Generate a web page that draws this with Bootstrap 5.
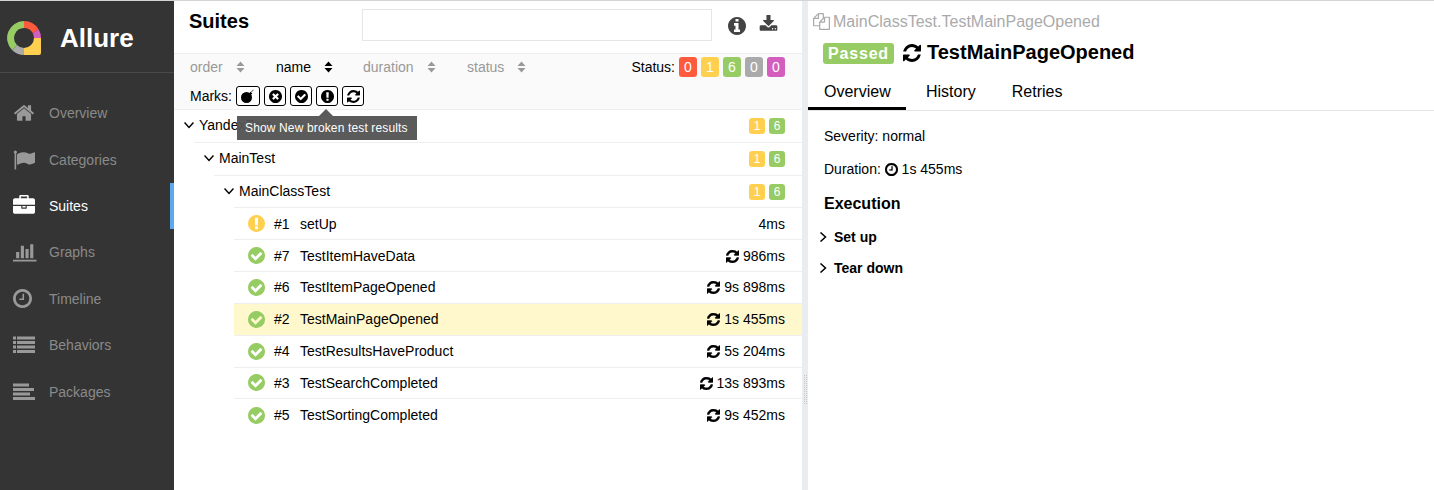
<!DOCTYPE html>
<html lang="en">
<head>
    <meta charset="UTF-8">
    <meta name="viewport" content="width=device-width, initial-scale=1.0">
    <title>Allure Report</title>
    <link href="https://cdn.jsdelivr.net/npm/bootstrap@5.3.1/dist/css/bootstrap.min.css" rel="stylesheet">
    <style>
        html, body { height: 100%; }
        body {
            font-family: "Liberation Sans", Arial, sans-serif;
            font-size: 14px;
            line-height: 20px;
            color: #000;
            background: #fff;
            border-top: 1px solid #d4d4d4;
            overflow: hidden;
        }
        .ico { fill: currentColor; display: inline-block; flex: none; }

        .app { height: 489px; }

        /* side menu */
        .side { width: 174px; background: #343434; flex: none; }
        .brand { height: 72px; border-bottom: 1px solid #4a4a4a; padding: 2px 0 0 7px; margin-bottom: 17px; }
        .brand-name { font-size: 26px; font-weight: 700; color: #fff; margin-left: 19px; line-height: 30px; }
        .side-link { height: 46.4px; padding-left: 13px; color: #8a8a8a; position: relative; }
        .side-link .ico { width: 22px; height: 22px; color: #999; }
        .side-link span { position: absolute; left: 49px; }
        .side-link.on { color: #fff; border-right: 4px solid #5ba9ef; }
        .side-link.on .ico { color: #fff; }

        /* suites pane */
        .suites { width: 628px; flex: none; position: relative; }
        .suites-top { height: 53px; padding: 8px 16px 0 15px; border-bottom: 1px solid #eee; }
        .suites-title { font-size: 20px; font-weight: 700; line-height: 24px; margin: 0; width: 173px; }
        .search-box { width: 350px; height: 32px; border: 1px solid #e6e6e6; }
        .top-icons { margin-left: 16px; color: #444; gap: 13px; }
        .info-ico { margin-top: 8px; }
        .save-ico { margin-top: 6px; }
        .controls { height: 56px; background: #fafafa; border-bottom: 1px solid #eee; padding: 3px 17px 0 16px; }
        .sorter { color: #999; position: absolute; display: flex; align-items: center; }
        .sorter.on { color: #000; }
        .sorter .ico { margin-left: 13px; width: 9px; height: 12px; }
        .sort-row { height: 20px; position: relative; }
        .stat { width: 18px; height: 20px; border-radius: 3px; color: #fff; text-align: center; font-size: 14px; line-height: 20px; margin-left: 4px; }
        .stat-sm { width: 16px; height: 16px; font-size: 12px; line-height: 16px; margin-top: 2px; }
        .bg-failed { background: #fd5a3e; }
        .bg-broken { background: #ffd050; }
        .bg-passed { background: #97cc64; }
        .bg-skipped { background: #aaa; }
        .bg-unknown { background: #d35ebe; }
        .marks-row { margin-top: 9px; height: 20px; }
        .mark-btn { width: 22px; height: 20px; border: 1px solid #000; border-radius: 3px; margin-left: 4px; background: #fff; display: flex; align-items: center; justify-content: center; }
        .mark-btn .ico { width: 13px; height: 13px; }
        .mark-btn.wide { width: 24px; }
        .mark-btn.wide .ico { width: 16px; height: 16px; }
        .hint { position: absolute; left: 63px; top: 115px; width: 180px; height: 24px; background: rgba(84, 84, 84, .96); color: #fff; font-size: 12px; letter-spacing: .14px; line-height: 24px; padding-left: 8px; }
        .hint::before { content: ""; position: absolute; left: 82px; top: -7px; border: 7px solid transparent; border-top: 0; border-bottom-color: #5a5a5a; }

        .chev { width: 10px; height: 10px; fill: none; stroke: #000; stroke-width: 1.5; flex: none; }
        .group-row { height: 33px; padding: 0 17px 2px 0; border-bottom: 1px solid #eee; }
        .group-row .chev { margin: 0 5px 0 -10px; }
        .lvl-1 { margin-left: 20px; }
        .lvl-2 { margin-left: 40px; }
        .lvl-3 { margin-left: 60px; height: 32.3px; }
        .tree-row { height: 31.85px; margin-left: 60px; padding: 0 17px 0 14px; border-bottom: 1px solid #eee; }
        .tree-row.picked { background: #fff8cc; }
        .tree-row:last-of-type { border-bottom: 0; }
        .tree-row .ico.st { width: 17px; height: 17px; }
        .tree-num { width: 26px; margin-left: 9px; }
        .tree-dur .ico { width: 13px; height: 13px; margin-right: 4px; vertical-align: -2px; stroke: currentColor; stroke-width: 50; }
        .ok { color: #97cc64; }
        .warn { color: #ffd050; }

        .splitter { width: 6px; background: #e9edf0; flex: none; display: flex; align-items: flex-start; justify-content: center; padding-top: 374px; }
        .grip { width: 5px; height: 30px; background: conic-gradient(#c6c6c6 25%, transparent 25%) 0 0 / 2px 2px; }

        /* test pane */
        .details { flex: 1 1 auto; min-width: 0; }
        .crumb { color: #aaa; font-size: 16px; padding: 8px 0 0 5px; height: 33px; }
        .crumb .ico { width: 17px; height: 17px; margin-right: 3px; }
        .test-head { padding: 5px 0 0 15px; height: 33px; }
        .passed-tag { background: #97cc64; color: #fff; font-weight: 700; font-size: 16px; border-radius: 3px; height: 21px; width: 71px; text-align: center; line-height: 21px; letter-spacing: .8px; }
        .test-title { font-size: 20px; font-weight: 700; margin: -2px 0 0 6px; line-height: 24px; }
        .test-head .ico { width: 18px; height: 18px; margin-left: 9px; }
        .tabs-row { height: 44px; border-bottom: 1px solid #e5e5e5; gap: 4px; padding-top: 3px; }
        .tab-item { font-size: 16px; padding: 6px 16px 0; height: 100%; display: flex; align-items: center; color: #000; border-bottom: 3px solid transparent; }
        .tab-item.on { border-bottom-color: #000; width: 98px; }
        .pane-body { padding: 15px 16px; }
        .info-line { margin-bottom: 13px; }
        .info-line .ico { width: 13px; height: 13px; vertical-align: -2px; stroke: currentColor; stroke-width: 30; }
        .exec-title { font-size: 16px; font-weight: 700; line-height: 20px; margin: 15px 0 13px; }
        .step-row { font-weight: 700; height: 31px; margin-left: -6px; align-items: flex-start; }
        .step-row .chev { margin: 5px 6px 0 0; }
    </style>
</head>
<body>
<svg width="0" height="0" class="position-absolute">
    <defs>
        <symbol id="i-home" viewBox="0 0 1792 1792"><path d="M1472 992v480q0 26-19 45t-45 19h-384v-384h-256v384h-384q-26 0-45-19t-19-45v-480q0-1 .5-3t.5-3l575-474 575 474q1 2 1 6zm223-69l-62 74q-8 9-21 11h-3q-13 0-21-7l-692-577-692 577q-12 8-24 7-13-2-21-11l-62-74q-8-10-7-23.5t11-21.5l719-599q32-26 76-26t76 26l244 204v-195q0-14 9-23t23-9h192q14 0 23 9t9 23v408l219 182q10 8 11 21.5t-7 23.5z"/></symbol>
        <symbol id="i-flag" viewBox="0 0 1792 1792"><path d="M320 256q0 72-64 110v1266q0 13-9.5 22.5t-22.5 9.5h-64q-13 0-22.5-9.5t-9.5-22.5v-1266q-64-38-64-110 0-53 37.5-90.5t90.5-37.5 90.5 37.5 37.5 90.5zm1472 64v763q0 25-12.5 38.5t-39.5 27.5q-215 116-369 116-61 0-123.5-22t-108.5-48-115.5-48-142.5-22q-192 0-464 146-17 9-33 9-26 0-45-19t-19-45v-742q0-32 31-55 21-14 79-43 236-120 421-120 107 0 200 29t219 88q38 19 88 19 54 0 117.5-21t110-47 88-47 54.5-21q26 0 45 19t19 45z"/></symbol>
        <symbol id="i-case" viewBox="0 0 1792 1792"><path d="M640 256h512v-128h-512v128zm1152 640v480q0 66-47 113t-113 47h-1472q-66 0-113-47t-47-113v-480h672v160q0 26 19 45t45 19h320q26 0 45-19t19-45v-160h672zm-768 0v128h-256v-128h256zm768-480v384h-1792v-384q0-66 47-113t113-47h352v-160q0-40 28-68t68-28h576q40 0 68 28t28 68v160h352q66 0 113 47t47 113z"/></symbol>
        <symbol id="i-chart" viewBox="0 0 2048 1792"><path d="M512 896v512h-256v-512h256zm384-512v1024h-256v-1024h256zm1024 1152v128h-2048v-1536h128v1408h1920zm-640-896v768h-256v-768h256zm384-384v1152h-256v-1152h256z"/></symbol>
        <symbol id="i-clock" viewBox="128 128 1536 1536"><path d="M1024 544v448q0 14-9 23t-23 9h-320q-14 0-23-9t-9-23v-64q0-14 9-23t23-9h224v-352q0-14 9-23t23-9h64q14 0 23 9t9 23zm416 352q0-148-73-273t-198-198-273-73-273 73-198 198-73 273 73 273 198 198 273 73 273-73 198-198 73-273zm224 0q0 209-103 385.5t-279.5 279.5-385.5 103-385.5-103-279.5-279.5-103-385.5 103-385.5 279.5-279.5 385.5-103 385.5 103 279.5 279.5 103 385.5z"/></symbol>
        <symbol id="i-list" viewBox="0 0 22 22"><path d="M0 2.500h3v3H0zM4 2.500h18v3H4zM0 7h3v3H0zM4 7h18v3H4zM0 11.500h3v3H0zM4 11.500h18v3H4zM0 16h3v3H0zM4 16h18v3H4z"/></symbol>
        <symbol id="i-align" viewBox="0 0 22 22"><path d="M0 2.500h16v3H0zM0 7h21v3H0zM0 11.500h17v3H0zM0 16h22v3H0z"/></symbol>
        <symbol id="i-refresh" viewBox="128 128 1536 1536"><path d="M1639 1056q0 5-1 7-64 268-268 434.5t-478 166.5q-146 0-282.5-55t-243.5-157l-129 129q-19 19-45 19t-45-19-19-45v-448q0-26 19-45t45-19h448q26 0 45 19t19 45-19 45l-137 137q71 66 161 102t187 36q134 0 250-65t186-179q11-17 53-117 8-23 30-23h192q13 0 22.5 9.500t9.500 22.500zm25-800v448q0 26-19 45t-45 19h-448q-26 0-45-19t-19-45 19-45l138-138q-148-137-349-137-134 0-250 65t-186 179q-11 17-53 117-8 23-30 23h-199q-13 0-22.500-9.500t-9.500-22.500v-7q65-268 270-434.500t480-166.500q146 0 284 55.500t245 156.500l130-129q19-19 45-19t45 19 19 45z"/></symbol>
        <symbol id="i-check" viewBox="128 128 1536 1536"><path d="M1412 734q0-28-18-46l-91-90q-19-19-45-19t-45 19l-408 407-226-226q-19-19-45-19t-45 19l-91 90q-18 18-18 46 0 27 18 45l362 362q19 19 45 19 27 0 46-19l543-543q18-18 18-45zm252 162q0 209-103 385.500t-279.500 279.500-385.500 103-385.500-103-279.500-279.500-103-385.500 103-385.500 279.500-279.500 385.500-103 385.500 103 279.500 279.500 103 385.500z"/></symbol>
        <symbol id="i-excl" viewBox="128 128 1536 1536"><path d="M896 128q209 0 385.500 103t279.500 279.500 103 385.500-103 385.500-279.500 279.500-385.500 103-385.500-103-279.500-279.500-103-385.500 103-385.500 279.500-279.500 385.500-103zm128 1247v-190q0-14-9-23.500t-22-9.500h-192q-13 0-23 10t-10 23v190q0 13 10 23t23 10h192q13 0 22-9.500t9-23.500zm-2-344l18-621q0-12-10-18-10-8-24-8h-220q-14 0-24 8-10 6-10 18l17 621q0 10 10 17.500t24 7.500h185q14 0 23.500-7.500t10.500-17.500z"/></symbol>
        <symbol id="i-times" viewBox="128 128 1536 1536"><path d="M1277 1122q0-26-19-45l-181-181 181-181q19-19 19-45 0-27-19-46l-90-90q-19-19-46-19-26 0-45 19l-181 181-181-181q-19-19-45-19-27 0-46 19l-90 90q-19 19-19 46 0 26 19 45l181 181-181 181q-19 19-19 45 0 27 19 46l90 90q19 19 46 19 26 0 45-19l181-181 181 181q19 19 45 19 27 0 46-19l90-90q19-19 19-46zm387-226q0 209-103 385.500t-279.500 279.500-385.500 103-385.500-103-279.500-279.500-103-385.500 103-385.500 279.500-279.500 385.500-103 385.500 103 279.500 279.500 103 385.500z"/></symbol>
        <symbol id="i-info" viewBox="128 128 1536 1536"><path d="M1152 1376v-160q0-14-9-23t-23-9h-96v-512q0-14-9-23t-23-9h-320q-14 0-23 9t-9 23v160q0 14 9 23t23 9h96v320h-96q-14 0-23 9t-9 23v160q0 14 9 23t23 9h448q14 0 23-9t9-23zm-128-896v-160q0-14-9-23t-23-9h-192q-14 0-23 9t-9 23v160q0 14 9 23t23 9h192q14 0 23-9t9-23zm640 416q0 209-103 385.500t-279.500 279.500-385.500 103-385.500-103-279.500-279.500-103-385.500 103-385.500 279.500-279.500 385.500-103 385.500 103 279.500 279.500 103 385.500z"/></symbol>
        <symbol id="i-download" viewBox="0 128 1792 1536"><path d="M1344 1344q0-26-19-45t-45-19-45 19-19 45 19 45 45 19 45-19 19-45zm256 0q0-26-19-45t-45-19-45 19-19 45 19 45 45 19 45-19 19-45zm128-224v320q0 40-28 68t-68 28h-1472q-40 0-68-28t-28-68v-320q0-40 28-68t68-28h465l135 136q58 56 136 56t136-56l136-136h464q40 0 68 28t28 68zm-325-569q17 41-14 70l-448 448q-18 19-45 19t-45-19l-448-448q-31-29-14-70 17-39 59-39h256v-448q0-26 19-45t45-19h256q26 0 45 19t19 45v448h256q42 0 59 39z"/></symbol>
        <symbol id="i-copy" viewBox="0 0 1792 1792"><path d="M1696 384q40 0 68 28t28 68v1216q0 40-28 68t-68 28h-960q-40 0-68-28t-28-68v-288h-544q-40 0-68-28t-28-68v-672q0-40 20-88t48-76l408-408q28-28 76-48t88-20h416q40 0 68 28t28 68v328q68-40 128-40h416zm-544 213l-299 299h299v-299zm-640-384l-299 299h299v-299zm196 647l316-316v-416h-384v416q0 40-28 68t-68 28h-416v640h512v-256q0-40 20-88t48-76zm956 804v-1152h-384v416q0 40-28 68t-68 28h-416v640h896z"/></symbol>
        <symbol id="i-bomb" viewBox="0 0 16 16"><circle cx="6.500" cy="9.500" r="5.500"/><path d="M9 5.500l1.700-1.700 1.600 1.600-1.700 1.700z"/><path d="M11.500 4q.5-1.500 2-2" fill="none" stroke="#777" stroke-width="1.200"/></symbol>
        <symbol id="i-sort" viewBox="0 0 9 12"><path d="M4.500 0.500L8.500 5H0.500zM0.500 7H8.500L4.500 11.500z"/></symbol>
    </defs>
</svg>

<div class="app d-flex">
    <nav class="side">
        <div class="brand d-flex align-items-center">
            <svg width="34" height="34" viewBox="0 0 34 34" fill="none" stroke-width="7">
                <path d="M17 3.500A13.500 13.500 0 0 1 28.700 10.250" stroke="#fd5a3e"/>
                <path d="M28.700 10.250A13.500 13.500 0 0 1 30.500 17" stroke="#d35ebe"/>
                <path d="M27 17H34V32Q34 34 32 34H17V27A10 10 0 0 0 27 17Z" fill="#ffd050"/>
                <path d="M17 30.500A13.500 13.500 0 0 1 7.500 26.500" stroke="#aaa"/>
                <path d="M7.500 26.500A13.500 13.500 0 0 1 17 3.500" stroke="#97cc64"/>
            </svg>
            <span class="brand-name">Allure</span>
        </div>
        <div class="side-link d-flex align-items-center"><svg class="ico"><use href="#i-home"/></svg><span>Overview</span></div>
        <div class="side-link d-flex align-items-center"><svg class="ico"><use href="#i-flag"/></svg><span>Categories</span></div>
        <div class="side-link on d-flex align-items-center"><svg class="ico"><use href="#i-case"/></svg><span>Suites</span></div>
        <div class="side-link d-flex align-items-center"><svg class="ico" style="width:25px"><use href="#i-chart"/></svg><span>Graphs</span></div>
        <div class="side-link d-flex align-items-center"><svg class="ico" style="width:19px;height:19px"><use href="#i-clock"/></svg><span>Timeline</span></div>
        <div class="side-link d-flex align-items-center"><svg class="ico"><use href="#i-list"/></svg><span>Behaviors</span></div>
        <div class="side-link d-flex align-items-center"><svg class="ico"><use href="#i-align"/></svg><span>Packages</span></div>
    </nav>

    <main class="suites">
        <div class="suites-top d-flex align-items-start">
            <h2 class="suites-title">Suites</h2>
            <div class="search-box"></div>
            <div class="top-icons d-flex align-items-start">
                <svg class="ico info-ico" width="18" height="18"><use href="#i-info"/></svg>
                <svg class="ico save-ico" width="19" height="18"><use href="#i-download"/></svg>
            </div>
        </div>

        <div class="controls">
            <div class="sort-row d-flex align-items-center justify-content-end">
                <div class="sorter" style="left:0">order<svg class="ico"><use href="#i-sort"/></svg></div>
                <div class="sorter on" style="left:86px">name<svg class="ico"><use href="#i-sort"/></svg></div>
                <div class="sorter" style="left:173px">duration<svg class="ico"><use href="#i-sort"/></svg></div>
                <div class="sorter" style="left:277px">status<svg class="ico"><use href="#i-sort"/></svg></div>
                <span>Status:</span>
                <div class="stat bg-failed">0</div>
                <div class="stat bg-broken">1</div>
                <div class="stat bg-passed">6</div>
                <div class="stat bg-skipped">0</div>
                <div class="stat bg-unknown">0</div>
            </div>
            <div class="marks-row d-flex align-items-center">
                <span>Marks:</span>
                <div class="mark-btn wide"><svg class="ico"><use href="#i-bomb"/></svg></div>
                <div class="mark-btn"><svg class="ico"><use href="#i-times"/></svg></div>
                <div class="mark-btn"><svg class="ico"><use href="#i-check"/></svg></div>
                <div class="mark-btn"><svg class="ico"><use href="#i-excl"/></svg></div>
                <div class="mark-btn"><svg class="ico"><use href="#i-refresh"/></svg></div>
            </div>
        </div>

        <div class="hint">Show New broken test results</div>

        <div class="group-row lvl-1 d-flex align-items-center">
            <svg class="chev" viewBox="0 0 10 10"><path d="M0.500 2.500L5 7.500L9.500 2.500"/></svg>
            <span class="flex-grow-1">YandexTest</span>
            <div class="stat stat-sm bg-broken">1</div><div class="stat stat-sm bg-passed">6</div>
        </div>
        <div class="group-row lvl-2 d-flex align-items-center">
            <svg class="chev" viewBox="0 0 10 10"><path d="M0.500 2.500L5 7.500L9.500 2.500"/></svg>
            <span class="flex-grow-1">MainTest</span>
            <div class="stat stat-sm bg-broken">1</div><div class="stat stat-sm bg-passed">6</div>
        </div>
        <div class="group-row lvl-3 d-flex align-items-center">
            <svg class="chev" viewBox="0 0 10 10"><path d="M0.500 2.500L5 7.500L9.500 2.500"/></svg>
            <span class="flex-grow-1">MainClassTest</span>
            <div class="stat stat-sm bg-broken">1</div><div class="stat stat-sm bg-passed">6</div>
        </div>

        <div class="tree-row d-flex align-items-center">
            <svg class="ico st warn"><use href="#i-excl"/></svg>
            <span class="tree-num">#1</span><span class="flex-grow-1">setUp</span>
            <span class="tree-dur">4ms</span>
        </div>
        <div class="tree-row d-flex align-items-center">
            <svg class="ico st ok"><use href="#i-check"/></svg>
            <span class="tree-num">#7</span><span class="flex-grow-1">TestItemHaveData</span>
            <span class="tree-dur"><svg class="ico"><use href="#i-refresh"/></svg>986ms</span>
        </div>
        <div class="tree-row d-flex align-items-center">
            <svg class="ico st ok"><use href="#i-check"/></svg>
            <span class="tree-num">#6</span><span class="flex-grow-1">TestItemPageOpened</span>
            <span class="tree-dur"><svg class="ico"><use href="#i-refresh"/></svg>9s 898ms</span>
        </div>
        <div class="tree-row picked d-flex align-items-center">
            <svg class="ico st ok"><use href="#i-check"/></svg>
            <span class="tree-num">#2</span><span class="flex-grow-1">TestMainPageOpened</span>
            <span class="tree-dur"><svg class="ico"><use href="#i-refresh"/></svg>1s 455ms</span>
        </div>
        <div class="tree-row d-flex align-items-center">
            <svg class="ico st ok"><use href="#i-check"/></svg>
            <span class="tree-num">#4</span><span class="flex-grow-1">TestResultsHaveProduct</span>
            <span class="tree-dur"><svg class="ico"><use href="#i-refresh"/></svg>5s 204ms</span>
        </div>
        <div class="tree-row d-flex align-items-center">
            <svg class="ico st ok"><use href="#i-check"/></svg>
            <span class="tree-num">#3</span><span class="flex-grow-1">TestSearchCompleted</span>
            <span class="tree-dur"><svg class="ico"><use href="#i-refresh"/></svg>13s 893ms</span>
        </div>
        <div class="tree-row d-flex align-items-center">
            <svg class="ico st ok"><use href="#i-check"/></svg>
            <span class="tree-num">#5</span><span class="flex-grow-1">TestSortingCompleted</span>
            <span class="tree-dur"><svg class="ico"><use href="#i-refresh"/></svg>9s 452ms</span>
        </div>
    </main>

    <div class="splitter"><div class="grip"></div></div>

    <section class="details">
        <div class="crumb d-flex align-items-center"><svg class="ico"><use href="#i-copy"/></svg>MainClassTest.TestMainPageOpened</div>
        <div class="test-head d-flex align-items-center">
            <span class="passed-tag">Passed</span>
            <svg class="ico"><use href="#i-refresh"/></svg>
            <h1 class="test-title">TestMainPageOpened</h1>
        </div>
        <div class="tabs-row d-flex">
            <div class="tab-item on">Overview</div>
            <div class="tab-item">History</div>
            <div class="tab-item">Retries</div>
        </div>
        <div class="pane-body">
            <div class="info-line">Severity: normal</div>
            <div class="info-line">Duration: <svg class="ico"><use href="#i-clock"/></svg> 1s 455ms</div>
            <h3 class="exec-title">Execution</h3>
            <div class="step-row d-flex"><svg class="chev" viewBox="0 0 10 10"><path d="M2.500 0.500L7.500 5L2.500 9.500"/></svg>Set up</div>
            <div class="step-row d-flex"><svg class="chev" viewBox="0 0 10 10"><path d="M2.500 0.500L7.500 5L2.500 9.500"/></svg>Tear down</div>
        </div>
    </section>
</div>
<script src="https://cdn.jsdelivr.net/npm/bootstrap@5.3.1/dist/js/bootstrap.bundle.min.js"></script>
</body>
</html>
